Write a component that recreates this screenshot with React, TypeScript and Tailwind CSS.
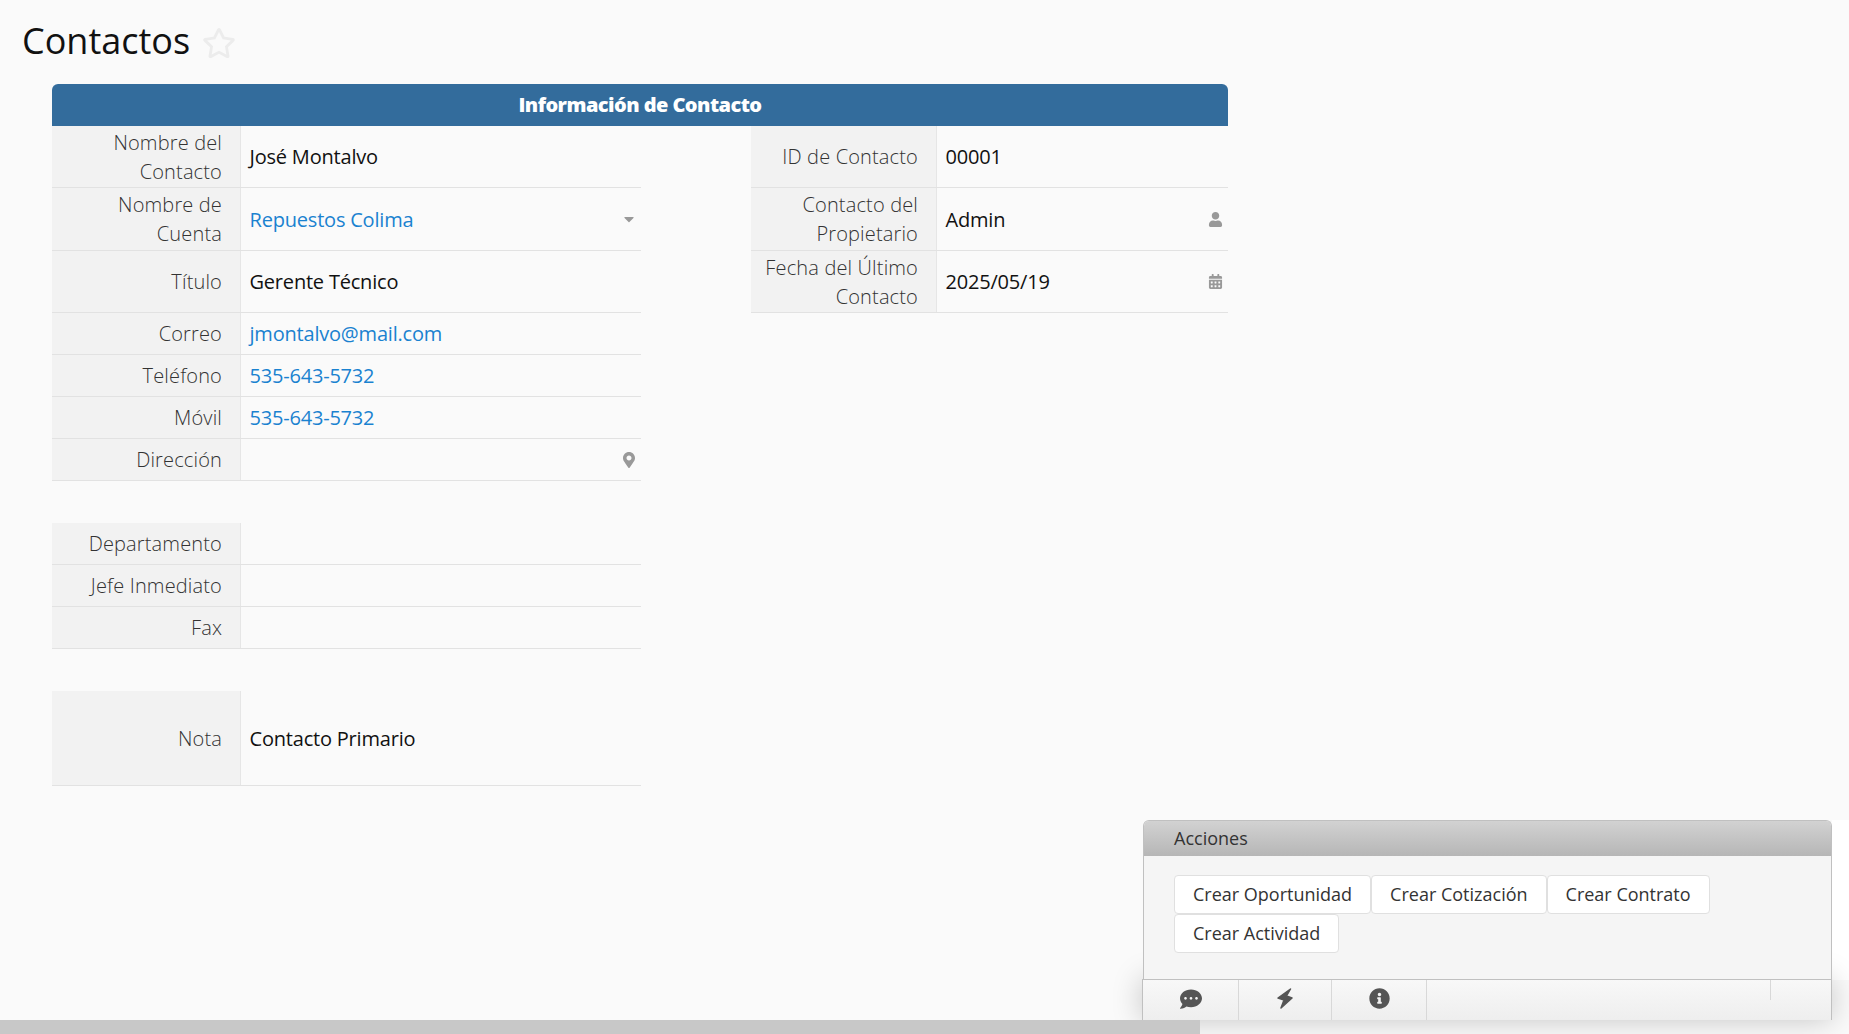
import type { ReactNode } from 'react';
import { FaCalendarAlt, FaCaretDown, FaCommentDots, FaInfoCircle, FaMapMarkerAlt, FaRegStar, FaUser } from 'react-icons/fa';

interface RowProps {
  label: ReactNode;
  value?: string;
  link?: boolean;
  icon?: ReactNode;
  heightClass: string;
  labelWidthClass?: string;
}

function Row({ label, value, link, icon, heightClass, labelWidthClass = 'w-[189px]' }: RowProps) {
  return (
    <div className={`flex border-b border-[#e2e2e2] ${heightClass}`}>
      <div className={`flex shrink-0 items-center justify-end border-r border-[#e6e6e6] bg-[#f2f2f2] pr-[18px] text-right text-[20px] leading-[29px] font-light tracking-[0.15px] text-[#333] ${labelWidthClass}`}>
        <span>{label}</span>
      </div>
      <div className="flex min-w-0 flex-1 items-center justify-between pr-[6px] pl-[8.5px] text-[20px] leading-[29px] tracking-[-0.2px]">
        <span className={link ? 'text-[#1a82d0]' : 'text-[#111]'}>{value}</span>
        {icon && <span className="text-[#999]">{icon}</span>}
      </div>
    </div>
  );
}

function ActionButton({ children }: { children: string }) {
  return (
    <button className="h-[39px] rounded-[4px] border border-[#e0e0e0] bg-white px-[18px] text-[18px] text-[#333]">
      {children}
    </button>
  );
}

// Slanted bolt, the icon packages only have a straighter one
function BoltIcon() {
  return (
    <svg width="16" height="21" viewBox="0 0 16 21" className="fill-[#555] stroke-[#555]" strokeWidth="1.5" strokeLinejoin="round">
      <polygon points="13.5,1 9.5,8 15,10 4,20 7,12 1,10" />
    </svg>
  );
}

export default function App() {
  return (
    <div className="relative flex h-screen flex-col overflow-hidden bg-[#fafafa] font-['Open_Sans',sans-serif]">
      <main className="min-h-0 flex-1">
        <div className="flex h-[84px] items-start pt-[15px] pl-[22px]">
          <h1 className="text-[36px] leading-[52px] font-normal text-[#111]">Contactos</h1>
          <FaRegStar className="mt-[11px] ml-[12px] text-[34px] text-[#ececec]" />
        </div>

        <section className="ml-[52px] w-[1176px]">
          <div className="flex h-[42px] items-center justify-center rounded-t-[6px] bg-[#336c9c] text-[20px] font-extrabold tracking-[-0.55px] text-white">
            Información de Contacto
          </div>
          <div className="flex justify-between">
            <div className="w-[589px]">
              <Row heightClass="h-[62px]" label={<>Nombre del<br />Contacto</>} value="José Montalvo" />
              <Row
                heightClass="h-[63px]"
                label={<>Nombre de<br />Cuenta</>}
                value="Repuestos Colima"
                link
                icon={<FaCaretDown className="-mr-[2px] text-[16px]" />}
              />
              <Row heightClass="h-[62px]" label="Título" value="Gerente Técnico" />
              <Row heightClass="h-[42px]" label="Correo" value="jmontalvo@mail.com" link />
              <Row heightClass="h-[42px]" label="Teléfono" value="535-643-5732" link />
              <Row heightClass="h-[42px]" label="Móvil" value="535-643-5732" link />
              <Row heightClass="h-[42px]" label="Dirección" icon={<FaMapMarkerAlt className="-mr-[2px] text-[16px]" />} />

              <div className="mt-[42px]">
                <Row heightClass="h-[42px]" label="Departamento" />
                <Row heightClass="h-[42px]" label="Jefe Inmediato" />
                <Row heightClass="h-[42px]" label="Fax" />
              </div>

              <div className="mt-[42px]">
                <Row heightClass="h-[95px]" label="Nota" value="Contacto Primario" />
              </div>
            </div>

            <div className="w-[477px]">
              <Row heightClass="h-[62px]" labelWidthClass="w-[186px]" label="ID de Contacto" value="00001" />
              <Row
                heightClass="h-[63px]"
                labelWidthClass="w-[186px]"
                label={<>Contacto del<br />Propietario</>}
                value="Admin"
                icon={<FaUser className="-mr-px text-[15px]" />}
              />
              <Row
                heightClass="h-[62px]"
                labelWidthClass="w-[186px]"
                label={<>Fecha del Último<br />Contacto</>}
                value="2025/05/19"
                icon={<FaCalendarAlt className="-mr-px text-[15px]" />}
              />
            </div>
          </div>
        </section>
      </main>

      {/* horizontal page scrollbar */}
      <div className="relative z-20 h-[14px] w-[1200px] shrink-0 bg-[#c8c8c8]" />

      {/* strip of white to the right of the floating panel */}
      <div className="absolute top-[820px] right-0 z-10 h-[160px] w-[17px] bg-white" />

      {/* floating actions panel */}
      <aside className="absolute right-[17px] bottom-[14px] z-10 w-[690px]">
        <div className="relative z-10 ml-px rounded-t-[6px] border-x border-t border-[#c0c0c0] bg-[#f5f5f5]">
          <div className="flex h-[35px] items-center rounded-t-[5px] bg-gradient-to-b from-[#d2d2d2] to-[#b6b6b6] pl-[30px] text-[18px] font-medium text-[#333]">
            Acciones
          </div>
          <div className="h-[123px] pt-[19px] pl-[30px]">
            <div className="flex flex-wrap">
              <ActionButton>Crear Oportunidad</ActionButton>
              <ActionButton>Crear Cotización</ActionButton>
              <ActionButton>Crear Contrato</ActionButton>
              <ActionButton>Crear Actividad</ActionButton>
            </div>
          </div>
        </div>
        <nav className="flex h-[41px] border-x border-t border-[#c0c0c0] bg-gradient-to-b from-[#f8f8f8] to-[#eeeeee] shadow-[0_0_30px_rgba(0,0,0,0.22)]">
          <div className="flex w-[96px] items-center justify-center border-r border-[#d8d8d8] pb-[3px] text-[22px] text-[#555]">
            <FaCommentDots />
          </div>
          <div className="flex w-[93px] items-center justify-center border-r border-[#d8d8d8] pb-[3px]">
            <BoltIcon />
          </div>
          <div className="flex w-[95px] items-center justify-center border-r border-[#d8d8d8] pb-[3px] text-[21px] text-[#555]">
            <FaInfoCircle />
          </div>
          <div className="flex-1" />
          <div className="h-[20px] w-[61px] border-l border-[#d8d8d8]" />
        </nav>
      </aside>
    </div>
  );
}
